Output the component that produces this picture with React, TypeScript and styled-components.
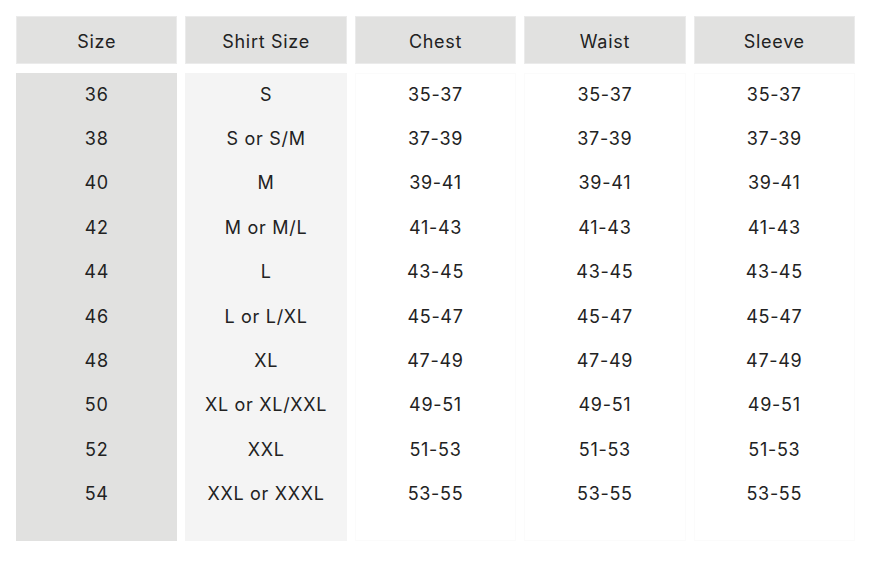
import React from "react";
import styled, { createGlobalStyle } from "styled-components";

const GlobalStyle = createGlobalStyle`
  body {
    margin: 0;
    background: #ffffff;
    font-family: Inter, "Open Sans", sans-serif;
    color: #222222;
  }
`;

const columns = ["Size", "Shirt Size", "Chest", "Waist", "Sleeve"];

const rows: string[][] = [
    ["36", "S", "35-37", "35-37", "35-37"],
    ["38", "S or S/M", "37-39", "37-39", "37-39"],
    ["40", "M", "39-41", "39-41", "39-41"],
    ["42", "M or M/L", "41-43", "41-43", "41-43"],
    ["44", "L", "43-45", "43-45", "43-45"],
    ["46", "L or L/XL", "45-47", "45-47", "45-47"],
    ["48", "XL", "47-49", "47-49", "47-49"],
    ["50", "XL or XL/XXL", "49-51", "49-51", "49-51"],
    ["52", "XXL", "51-53", "51-53", "51-53"],
    ["54", "XXL or XXXL", "53-55", "53-55", "53-55"],
];

const tones = ["#e1e1e0", "#f4f4f4", "#ffffff", "#ffffff", "#ffffff"];

const Page = styled.div`
  padding: 16px;
`;

const Chart = styled.div`
  width: 839px;
  display: grid;
  grid-template-columns: repeat(5, 1fr);
  column-gap: 8px;
  row-gap: 9px;
`;

const HeadCell = styled.div`
  height: 48px;
  box-sizing: border-box;
  border: 1px solid #ebebeb;
  background: #e1e1e0;
  display: flex;
  align-items: center;
  justify-content: center;
  font-size: 18px;
  letter-spacing: 0.7px;
  padding-top: 2px;
`;

const Column = styled.div<{ $tone: string }>`
  background: ${(p) => p.$tone};
  border: 1px solid ${(p) => (p.$tone === "#ffffff" ? "#fbfbfb" : p.$tone)};
  padding: 0 0 22px;
  display: flex;
  flex-direction: column;
`;

const Cell = styled.div`
  height: 44.4px;
  display: flex;
  align-items: center;
  justify-content: center;
  font-size: 18px;
  letter-spacing: 0.7px;
  padding-bottom: 4px;
  box-sizing: border-box;
`;

export default function App() {
    return (
        <Page>
            <GlobalStyle />
            <Chart>
                {columns.map((c) => (
                    <HeadCell key={c}>{c}</HeadCell>
                ))}
                {columns.map((c, ci) => (
                    <Column key={c} $tone={tones[ci]}>
                        {rows.map((r) => (
                            <Cell key={r[0]}>{r[ci]}</Cell>
                        ))}
                    </Column>
                ))}
            </Chart>
        </Page>
    );
}
